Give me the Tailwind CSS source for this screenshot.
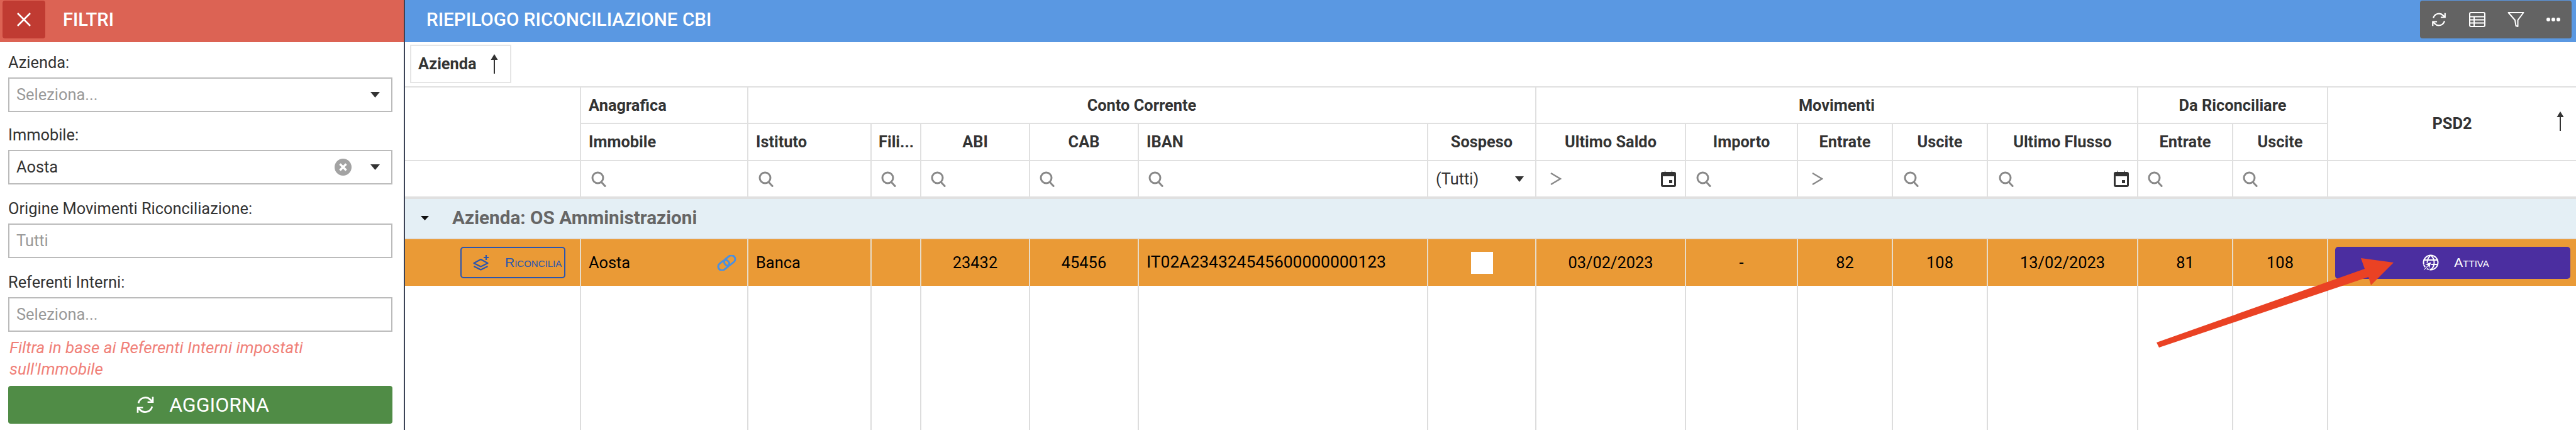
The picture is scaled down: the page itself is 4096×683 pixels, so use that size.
<!DOCTYPE html>
<html lang="it">
<head>
<meta charset="utf-8">
<title>Riepilogo Riconciliazione CBI</title>
<script src="https://cdn.jsdelivr.net/npm/@tailwindcss/browser@4"></script>
</head>
<body class="overflow-hidden bg-white">
<div class="relative flex h-[683px] w-[4096px] overflow-hidden bg-white font-['Roboto',sans-serif] text-[25.4px] text-[#333]">

  <aside class="flex h-full w-[644px] shrink-0 flex-col border-r-2 border-[#3c4356]">
    <header class="flex h-[67px] shrink-0 items-start bg-[#dc6354] pl-[4px] pt-[1px]">
      <button class="flex h-[60px] w-[68px] items-center justify-center rounded-[4px] bg-[#c03b32]">
        <svg width="24" height="24" viewBox="0 0 24 24" fill="none" stroke="#fff" stroke-width="2.6"><path d="M2 2l20 20M22 2L2 22"/></svg>
      </button>
      <h2 class="ml-[28px] text-[29.2px] font-medium leading-[60px] text-white">FILTRI</h2>
    </header>
    <div class="flex flex-col pl-[13px] pr-[18px] pt-[14px]">
      <div class="mb-[18px]">
        <div class="mb-[6px] leading-[36px]">Azienda:</div>
        <div class="flex h-[55px] items-center border-[2.5px] border-[#bbb] pl-[11px] pr-[18px] text-[#999]">
          <span class="flex-1">Seleziona...</span>
          <svg width="15" height="9" viewBox="0 0 15 9"><path d="M0 0h15L7.5 9z" fill="#333"/></svg>
        </div>
      </div>
      <div class="mb-[20px]">
        <div class="mb-[6px] leading-[36px]">Immobile:</div>
        <div class="flex h-[55px] items-center border-[2.5px] border-[#bbb] pl-[11px] pr-[18px] text-[#333]">
          <span class="flex-1">Aosta</span>
          <svg class="mr-[30px]" width="27" height="27" viewBox="0 0 27 27"><circle cx="13.5" cy="13.5" r="13.5" fill="#a3a3a3"/><path d="M8.5 8.5l10 10M18.5 8.5l-10 10" stroke="#fff" stroke-width="3.4"/></svg>
          <svg width="15" height="9" viewBox="0 0 15 9"><path d="M0 0h15L7.5 9z" fill="#333"/></svg>
        </div>
      </div>
      <div class="mb-[20px]">
        <div class="mb-[6px] leading-[36px]">Origine Movimenti Riconciliazione:</div>
        <div class="flex h-[55px] items-center border-[2.5px] border-[#bbb] pl-[11px] text-[#999]">Tutti</div>
      </div>
      <div>
        <div class="mb-[6px] leading-[36px]">Referenti Interni:</div>
        <div class="flex h-[55px] items-center border-[2.5px] border-[#bbb] pl-[11px] text-[#999]">Seleziona...</div>
      </div>
      <p class="mt-[8px] pl-[2px] text-[26px] italic leading-[34px] text-[#f08078]">Filtra in base ai Referenti Interni impostati<br>sull'Immobile</p>
      <button class="mt-[10px] flex h-[60px] w-full items-center justify-center gap-[22px] rounded-[4px] bg-[#508c46] pl-[6px] text-[32px] text-white">
        <svg width="32" height="32" viewBox="0 0 24 24" fill="none" stroke="#fff" stroke-width="2"><path d="M3.8 10a8.5 8.5 0 0 1 14.4-4l2.6 2.6M21 2.5v6.3h-6.3M20.2 14a8.5 8.5 0 0 1-14.4 4l-2.6-2.6M3 21.5v-6.3h6.3"/></svg>
        <span>AGGIORNA</span>
      </button>
    </div>
  </aside>

  <main class="flex min-w-0 flex-1 flex-col">
    <header class="flex h-[67px] shrink-0 items-start justify-between bg-[#5a98e2] pl-[34px] pr-[7px] pt-[1px]">
      <h1 class="text-[29.7px] font-medium leading-[60px] text-white">RIEPILOGO RICONCILIAZIONE CBI</h1>
      <div class="flex h-[60px] w-[241px] items-center rounded-[4px] bg-[#636363] pl-[17px]">
        <svg class="mr-[35px]" width="26" height="26" viewBox="0 0 24 24" fill="none" stroke="#fff" stroke-width="2"><path d="M3.8 10a8.5 8.5 0 0 1 14.4-4l2.6 2.6M21 2.5v6.3h-6.3M20.2 14a8.5 8.5 0 0 1-14.4 4l-2.6-2.6M3 21.5v-6.3h6.3"/></svg>
        <svg class="mr-[35px]" width="26" height="26" viewBox="0 0 26 26" fill="none" stroke="#fff" stroke-width="2"><rect x="1" y="2" width="24" height="22" rx="2"/><path d="M1 8.5h24M1 13.5h24M1 18.5h24M8 8.5V24"/></svg>
        <svg class="mr-[34px]" width="27" height="26" viewBox="0 0 27 26" fill="none" stroke="#fff" stroke-width="2" stroke-linejoin="round"><path d="M1.500 2h24L16.500 14v10l-3-1-1.500-9z"/></svg>
        <svg width="24" height="8" viewBox="0 0 24 8" fill="#fff"><circle cx="4" cy="4" r="3"/><circle cx="12" cy="4" r="3"/><circle cx="20" cy="4" r="3"/></svg>
      </div>
    </header>

    <div class="h-[70px] shrink-0 pl-[8px] pt-[4px]">
      <div class="flex h-[61px] w-[161px] items-center border-2 border-[#e5e5e5] pl-[11px] font-bold">
        <span>Azienda</span>
        <svg class="ml-[22px]" width="12" height="31" viewBox="0 0 12 31"><path d="M6 0l5.500 9H.5z" fill="#333"/><path d="M6 7v24" stroke="#333" stroke-width="2"/></svg>
      </div>
    </div>

    <div class="grid flex-1 grid-cols-[280px_266px_196px_79px_173px_173px_460px_172px_238px_178px_151px_151px_239px_151px_151px_394px] grid-rows-[58px_59px_60px_64px_74px_1fr] border-t-2 border-[#e0e0e0]">

      <!-- header row 1 + 2 -->
      <div class="row-span-2 border-b-2 border-r-2 border-[#e0e0e0]"></div>
      <div class="flex items-center border-b-2 border-r-2 border-[#e0e0e0] pl-[12px] font-bold">Anagrafica</div>
      <div class="col-span-6 flex items-center justify-center border-b-2 border-r-2 border-[#e0e0e0] font-bold">Conto Corrente</div>
      <div class="col-span-5 flex items-center justify-center border-b-2 border-r-2 border-[#e0e0e0] font-bold">Movimenti</div>
      <div class="col-span-2 flex items-center justify-center border-b-2 border-r-2 border-[#e0e0e0] font-bold">Da Riconciliare</div>
      <div class="relative row-span-2 flex items-center justify-center border-b-2 border-[#e0e0e0] font-bold">
        <span>PSD2</span>
        <svg class="absolute right-[19px] top-[38px]" width="12" height="31" viewBox="0 0 12 31"><path d="M6 0l5.500 9H.5z" fill="#333"/><path d="M6 7v24" stroke="#333" stroke-width="2"/></svg>
      </div>

      <div class="flex items-center border-b-2 border-r-2 border-[#e0e0e0] pl-[12px] font-bold">Immobile</div>
      <div class="flex items-center border-b-2 border-r-2 border-[#e0e0e0] pl-[12px] font-bold">Istituto</div>
      <div class="flex items-center border-b-2 border-r-2 border-[#e0e0e0] pl-[11px] font-bold">Fili...</div>
      <div class="flex items-center justify-center border-b-2 border-r-2 border-[#e0e0e0] font-bold">ABI</div>
      <div class="flex items-center justify-center border-b-2 border-r-2 border-[#e0e0e0] font-bold">CAB</div>
      <div class="flex items-center border-b-2 border-r-2 border-[#e0e0e0] pl-[12px] font-bold">IBAN</div>
      <div class="flex items-center justify-center border-b-2 border-r-2 border-[#e0e0e0] font-bold">Sospeso</div>
      <div class="flex items-center justify-center border-b-2 border-r-2 border-[#e0e0e0] font-bold">Ultimo Saldo</div>
      <div class="flex items-center justify-center border-b-2 border-r-2 border-[#e0e0e0] font-bold">Importo</div>
      <div class="flex items-center justify-center border-b-2 border-r-2 border-[#e0e0e0] font-bold">Entrate</div>
      <div class="flex items-center justify-center border-b-2 border-r-2 border-[#e0e0e0] font-bold">Uscite</div>
      <div class="flex items-center justify-center border-b-2 border-r-2 border-[#e0e0e0] font-bold">Ultimo Flusso</div>
      <div class="flex items-center justify-center border-b-2 border-r-2 border-[#e0e0e0] font-bold">Entrate</div>
      <div class="flex items-center justify-center border-b-2 border-r-2 border-[#e0e0e0] font-bold">Uscite</div>

      <!-- filter row -->
      <div class="border-b-4 border-r-2 border-[#e0e0e0]"></div>
      <div class="flex items-center border-b-4 border-r-2 border-[#e0e0e0] pl-[16px]"><svg width="25" height="25" viewBox="0 0 25 25" fill="none" stroke="#888" stroke-width="3"><circle cx="10.500" cy="10.500" r="8.500"/><path d="M16 17l7 7.500"/></svg></div>
      <div class="flex items-center border-b-4 border-r-2 border-[#e0e0e0] pl-[16px]"><svg width="25" height="25" viewBox="0 0 25 25" fill="none" stroke="#888" stroke-width="3"><circle cx="10.500" cy="10.500" r="8.500"/><path d="M16 17l7 7.500"/></svg></div>
      <div class="flex items-center border-b-4 border-r-2 border-[#e0e0e0] pl-[15px]"><svg width="25" height="25" viewBox="0 0 25 25" fill="none" stroke="#888" stroke-width="3"><circle cx="10.500" cy="10.500" r="8.500"/><path d="M16 17l7 7.500"/></svg></div>
      <div class="flex items-center border-b-4 border-r-2 border-[#e0e0e0] pl-[15px]"><svg width="25" height="25" viewBox="0 0 25 25" fill="none" stroke="#888" stroke-width="3"><circle cx="10.500" cy="10.500" r="8.500"/><path d="M16 17l7 7.500"/></svg></div>
      <div class="flex items-center border-b-4 border-r-2 border-[#e0e0e0] pl-[15px]"><svg width="25" height="25" viewBox="0 0 25 25" fill="none" stroke="#888" stroke-width="3"><circle cx="10.500" cy="10.500" r="8.500"/><path d="M16 17l7 7.500"/></svg></div>
      <div class="flex items-center border-b-4 border-r-2 border-[#e0e0e0] pl-[15px]"><svg width="25" height="25" viewBox="0 0 25 25" fill="none" stroke="#888" stroke-width="3"><circle cx="10.500" cy="10.500" r="8.500"/><path d="M16 17l7 7.500"/></svg></div>
      <div class="flex items-center justify-between border-b-4 border-r-2 border-[#e0e0e0] pl-[12px] pr-[18px]"><span>(Tutti)</span><svg width="14" height="9" viewBox="0 0 14 9"><path d="M0 0h14L7 9z" fill="#333"/></svg></div>
      <div class="flex items-center justify-between border-b-4 border-r-2 border-[#e0e0e0] pl-[21px] pr-[14px]">
        <svg width="19" height="24" viewBox="0 0 19 24" fill="none" stroke="#888" stroke-width="2.400"><path d="M2 3l15 9-15 9"/></svg>
        <svg width="24" height="26" viewBox="0 0 24 26"><path fill-rule="evenodd" fill="#333" d="M3 2h3V0h1v2h10V0h1v2h3a3 3 0 0 1 3 3v18a3 3 0 0 1-3 3H3a3 3 0 0 1-3-3V5a3 3 0 0 1 3-3zM3 9v14h18V9z"/><rect x="13" y="15" width="5" height="5" fill="#333"/></svg>
      </div>
      <div class="flex items-center border-b-4 border-r-2 border-[#e0e0e0] pl-[16px]"><svg width="25" height="25" viewBox="0 0 25 25" fill="none" stroke="#888" stroke-width="3"><circle cx="10.500" cy="10.500" r="8.500"/><path d="M16 17l7 7.500"/></svg></div>
      <div class="flex items-center border-b-4 border-r-2 border-[#e0e0e0] pl-[21px]"><svg width="19" height="24" viewBox="0 0 19 24" fill="none" stroke="#888" stroke-width="2.400"><path d="M2 3l15 9-15 9"/></svg></div>
      <div class="flex items-center border-b-4 border-r-2 border-[#e0e0e0] pl-[17px]"><svg width="25" height="25" viewBox="0 0 25 25" fill="none" stroke="#888" stroke-width="3"><circle cx="10.500" cy="10.500" r="8.500"/><path d="M16 17l7 7.500"/></svg></div>
      <div class="flex items-center justify-between border-b-4 border-r-2 border-[#e0e0e0] pl-[17px] pr-[13px]">
        <svg width="25" height="25" viewBox="0 0 25 25" fill="none" stroke="#888" stroke-width="3"><circle cx="10.500" cy="10.500" r="8.500"/><path d="M16 17l7 7.500"/></svg>
        <svg width="24" height="26" viewBox="0 0 24 26"><path fill-rule="evenodd" fill="#333" d="M3 2h3V0h1v2h10V0h1v2h3a3 3 0 0 1 3 3v18a3 3 0 0 1-3 3H3a3 3 0 0 1-3-3V5a3 3 0 0 1 3-3zM3 9v14h18V9z"/><rect x="13" y="15" width="5" height="5" fill="#333"/></svg>
      </div>
      <div class="flex items-center border-b-4 border-r-2 border-[#e0e0e0] pl-[15px]"><svg width="25" height="25" viewBox="0 0 25 25" fill="none" stroke="#888" stroke-width="3"><circle cx="10.500" cy="10.500" r="8.500"/><path d="M16 17l7 7.500"/></svg></div>
      <div class="flex items-center border-b-4 border-r-2 border-[#e0e0e0] pl-[15px]"><svg width="25" height="25" viewBox="0 0 25 25" fill="none" stroke="#888" stroke-width="3"><circle cx="10.500" cy="10.500" r="8.500"/><path d="M16 17l7 7.500"/></svg></div>
      <div class="border-b-4 border-[#e0e0e0]"></div>

      <!-- group row -->
      <div class="col-span-full flex items-center border-b-2 border-[#e0e0e0] bg-[#e4eff5] pl-[25px] pb-[2px]">
        <svg width="13" height="7" viewBox="0 0 13 7"><path d="M0 0h13L6.500 7z" fill="#111"/></svg>
        <span class="ml-[37px] text-[29.7px] font-bold text-[#666]">Azienda: OS Amministrazioni</span>
      </div>

      <!-- data row -->
      <div class="flex items-center justify-end border-r-2 border-[#e8dcc8] bg-[#ea9a36] pr-[23px]">
        <button class="flex h-[50px] w-[167px] items-center rounded-[5px] border-2 border-[#2a55b0] pl-[18px] font-['Liberation_Sans',sans-serif] text-[21px] text-[#2a55b0] [font-variant:small-caps]">
          <svg width="27" height="26" viewBox="0 0 27 26" fill="none" stroke="#2a55b0" stroke-width="2.200" stroke-linejoin="round"><path d="M1.500 14l11-6 11 6-11 5.500z"/><path d="M1.500 19l11 5.500 11-5.500"/><path d="M21 1v8M17 5h8"/></svg>
          <span class="ml-[24px]">Riconcilia</span>
        </button>
      </div>
      <div class="flex items-center justify-between border-r-2 border-[#e8dcc8] bg-[#ea9a36] pl-[12px] pr-[17px] text-[25.4px] text-black">
        <span>Aosta</span>
        <svg width="31" height="25" viewBox="0 0 31 25" fill="none" stroke="#4a90e2" stroke-width="3"><g transform="rotate(-38 15.500 12.500)"><rect x="0" y="6.500" width="19" height="12" rx="6"/><rect x="12" y="6.500" width="19" height="12" rx="6"/></g></svg>
      </div>
      <div class="flex items-center border-r-2 border-[#e8dcc8] bg-[#ea9a36] pl-[12px] text-[25.4px] text-black">Banca</div>
      <div class="border-r-2 border-[#e8dcc8] bg-[#ea9a36]"></div>
      <div class="flex items-center justify-center border-r-2 border-[#e8dcc8] bg-[#ea9a36] text-[25.4px] text-black">23432</div>
      <div class="flex items-center justify-center border-r-2 border-[#e8dcc8] bg-[#ea9a36] text-[25.4px] text-black">45456</div>
      <div class="flex items-center border-r-2 border-[#e8dcc8] bg-[#ea9a36] pl-[12px] text-[26.4px] text-black">IT02A234324545600000000123</div>
      <div class="flex items-center justify-center border-r-2 border-[#e8dcc8] bg-[#ea9a36]"><div class="h-[35px] w-[35px] bg-white"></div></div>
      <div class="flex items-center justify-center border-r-2 border-[#e8dcc8] bg-[#ea9a36] text-[25.4px] text-black">03/02/2023</div>
      <div class="flex items-center justify-center border-r-2 border-[#e8dcc8] bg-[#ea9a36] text-[25.4px] text-black">-</div>
      <div class="flex items-center justify-center border-r-2 border-[#e8dcc8] bg-[#ea9a36] text-[25.4px] text-black">82</div>
      <div class="flex items-center justify-center border-r-2 border-[#e8dcc8] bg-[#ea9a36] text-[25.4px] text-black">108</div>
      <div class="flex items-center justify-center border-r-2 border-[#e8dcc8] bg-[#ea9a36] text-[25.4px] text-black">13/02/2023</div>
      <div class="flex items-center justify-center border-r-2 border-[#e8dcc8] bg-[#ea9a36] text-[25.4px] text-black">81</div>
      <div class="flex items-center justify-center border-r-2 border-[#e8dcc8] bg-[#ea9a36] text-[25.4px] text-black">108</div>
      <div class="flex items-center bg-[#ea9a36] pl-[11px] pr-[9px]">
        <button class="flex h-[51px] w-full items-center justify-center gap-[24px] rounded-[5px] bg-[#4b2ea0] pl-[10px] font-['Liberation_Sans',sans-serif] text-[21px] text-white [font-variant:small-caps]">
          <svg width="26" height="26" viewBox="0 0 26 26" fill="none" stroke="#fff" stroke-width="2"><circle cx="13" cy="13" r="11.500"/><path d="M1.500 9h23M1.500 16h23M13 1.500c-4 3-5.500 7-5.500 11.500s1.500 8.500 5.500 11.500M13 1.500c4 3 5.500 7 5.500 11.500s-1.500 8.500-5.500 11.500"/><path d="M14.500 11.500L2.500 16l5 1.500L1 24.500l1.500 1.500 6.500-6.500 1.500 5z" fill="#fff" stroke="#4b2ea0" stroke-width="1.200"/></svg>
          <span>Attiva</span>
        </button>
      </div>

      <!-- empty body -->
      <div class="border-r-2 border-[#ddd]"></div><div class="border-r-2 border-[#ddd]"></div><div class="border-r-2 border-[#ddd]"></div><div class="border-r-2 border-[#ddd]"></div>
      <div class="border-r-2 border-[#ddd]"></div><div class="border-r-2 border-[#ddd]"></div><div class="border-r-2 border-[#ddd]"></div><div class="border-r-2 border-[#ddd]"></div>
      <div class="border-r-2 border-[#ddd]"></div><div class="border-r-2 border-[#ddd]"></div><div class="border-r-2 border-[#ddd]"></div><div class="border-r-2 border-[#ddd]"></div>
      <div class="border-r-2 border-[#ddd]"></div><div class="border-r-2 border-[#ddd]"></div><div class="border-r-2 border-[#ddd]"></div><div></div>
    </div>
  </main>

  <!-- annotation arrow laid over the page -->
  <svg class="pointer-events-none absolute left-[3400px] top-[400px]" width="420" height="160" viewBox="0 0 420 160"><path fill="#ea4224" d="M354 10L406 17L370 53L366 40L33 152L29 144L360 27Z"/></svg>
</div>
</body>
</html>
